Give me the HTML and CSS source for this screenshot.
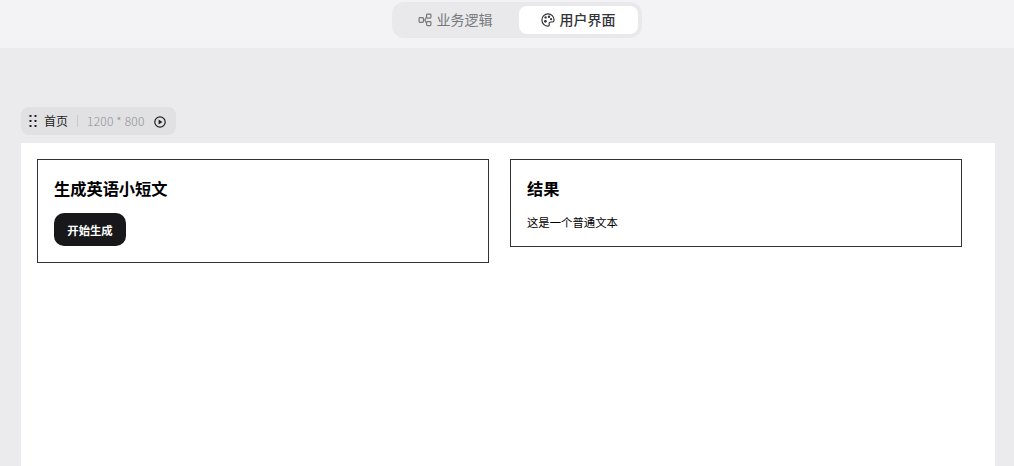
FILE: index.html
```html
<!DOCTYPE html>
<html lang="zh-CN">
<head>
  <meta charset="UTF-8">
  <title>用户界面</title>
  <link rel="stylesheet" href="styles.css">
</head>
<body>

  <header class="topbar">
    <div class="tabs">
      <div class="tab">
        <svg width="14" height="14" viewBox="0 0 14 14" fill="none" stroke="currentColor" stroke-width="1.2">
          <rect x="1.1" y="4.6" width="4.3" height="4.8" rx="0.8"/>
          <rect x="8.6" y="1.1" width="4.3" height="4" rx="0.8"/>
          <rect x="8.6" y="8.6" width="4.3" height="4" rx="0.8"/>
          <path d="M5.4 7H7L8.6 3.4M7 7L8.6 10.4"/>
        </svg>
        <span>业务逻辑</span>
      </div>
      <div class="tab active">
        <svg width="14" height="14" viewBox="0 0 14 14" fill="none" stroke="currentColor" stroke-width="1.2">
          <path d="M7 .9a6.1 6.1 0 1 0 0 12.2c.9 0 1.4-.6 1.2-1.4-.5-1.7.3-2.8 1.9-2.7 1.6.1 3-.3 3-2A6.1 6.1 0 0 0 7 .9Z"/>
          <g fill="currentColor" stroke="none">
            <circle cx="4.6" cy="4.4" r="1.2"/>
            <circle cx="8" cy="3.7" r="1.2"/>
            <circle cx="10.1" cy="6.2" r="1.1"/>
            <circle cx="4.4" cy="8.3" r="1.4"/>
          </g>
        </svg>
        <span>用户界面</span>
      </div>
    </div>
  </header>

  <main class="workspace">
    <div class="page-bar">
      <svg width="8" height="12" viewBox="0 0 8 12" fill="currentColor">
        <rect x="0.5" y="0" width="2" height="2" rx="0.4"/>
        <rect x="5.5" y="0" width="2" height="2" rx="0.4"/>
        <rect x="0.5" y="5" width="2" height="2" rx="0.4"/>
        <rect x="5.5" y="5" width="2" height="2" rx="0.4"/>
        <rect x="0.5" y="10" width="2" height="2" rx="0.4"/>
        <rect x="5.5" y="10" width="2" height="2" rx="0.4"/>
      </svg>
      <span class="page-name">首页</span>
      <span class="divider"></span>
      <span class="page-size">1200 * 800</span>
      <svg class="play" width="12" height="12" viewBox="0 0 12 12" fill="none" stroke="currentColor" stroke-width="1.2">
        <circle cx="6" cy="6" r="5.2"/>
        <path d="M4.6 3.6L8.4 6L4.6 8.4Z" fill="currentColor" stroke="none"/>
      </svg>
    </div>

    <div class="canvas">
      <section class="card">
        <h2>生成英语小短文</h2>
        <button class="generate">开始生成</button>
      </section>
      <section class="card">
        <h2>结果</h2>
        <p>这是一个普通文本</p>
      </section>
    </div>
  </main>

</body>
</html>
```
FILE: styles.css
```css
* {
  box-sizing: border-box;
}

body {
  margin: 0;
  height: 466px;
  overflow: hidden;
  background: #ebebed;
  color: #1c1d23;
  font-family: "Noto Sans CJK SC", sans-serif;
}

.topbar {
  height: 48px;
  padding: 2px 0 0 392px;
  background: #f3f3f5;
}

.tabs {
  display: flex;
  width: 250px;
  height: 36px;
  padding: 4px;
  border-radius: 12px;
  background: #e9e9eb;
}

.tab {
  display: flex;
  align-items: center;
  justify-content: center;
  gap: 4.5px;
  width: 119px;
  padding-right: 0.5px;
  border-radius: 8px;
  color: #77787b;
  font-size: 14px;
  line-height: 20px;
}

.tab span {
  padding-bottom: 2px;
}

.tab:first-child {
  width: 123px;
  padding-right: 4.5px;
}

.tab.active {
  background: #fff;
  color: #34353a;
  font-weight: 500;
}

.workspace {
  padding: 59px 19px 0 21px;
}

.page-bar {
  display: flex;
  align-items: center;
  width: 155px;
  height: 28px;
  margin-bottom: 8px;
  padding: 0 9px 0 8px;
  border-radius: 8px;
  background: #e1e1e3;
  font-size: 12px;
  line-height: 16px;
}

.page-name {
  margin-left: 7px;
}

.divider {
  width: 1px;
  height: 12px;
  margin: 0 9px;
  background: #c9c9cc;
}

.page-size {
  width: 58px;
  color: #8f9095;
  font-weight: 300;
  letter-spacing: 0.2px;
  white-space: nowrap;
}

.play {
  margin: 2px 0 0 9px;
}

.canvas {
  display: flex;
  align-items: flex-start;
  gap: 21px;
  height: 323px;
  padding: 16px;
  background: #fff;
}

.card {
  width: 452px;
  padding: 15px 16px 16px;
  border: 1px solid #333;
  color: #000;
}

.card h2 {
  margin: 0 0 12px;
  font-size: 16.23px;
  line-height: 26px;
}

.card p {
  margin: 0;
  padding-top: 1px;
  font-size: 11.36px;
  line-height: 16px;
}

.generate {
  display: block;
  width: 72px;
  height: 33px;
  padding: 0;
  border: none;
  border-radius: 10px;
  background: #18181a;
  color: #fff;
  font-family: inherit;
  font-size: 11.36px;
  font-weight: 700;
}
```
